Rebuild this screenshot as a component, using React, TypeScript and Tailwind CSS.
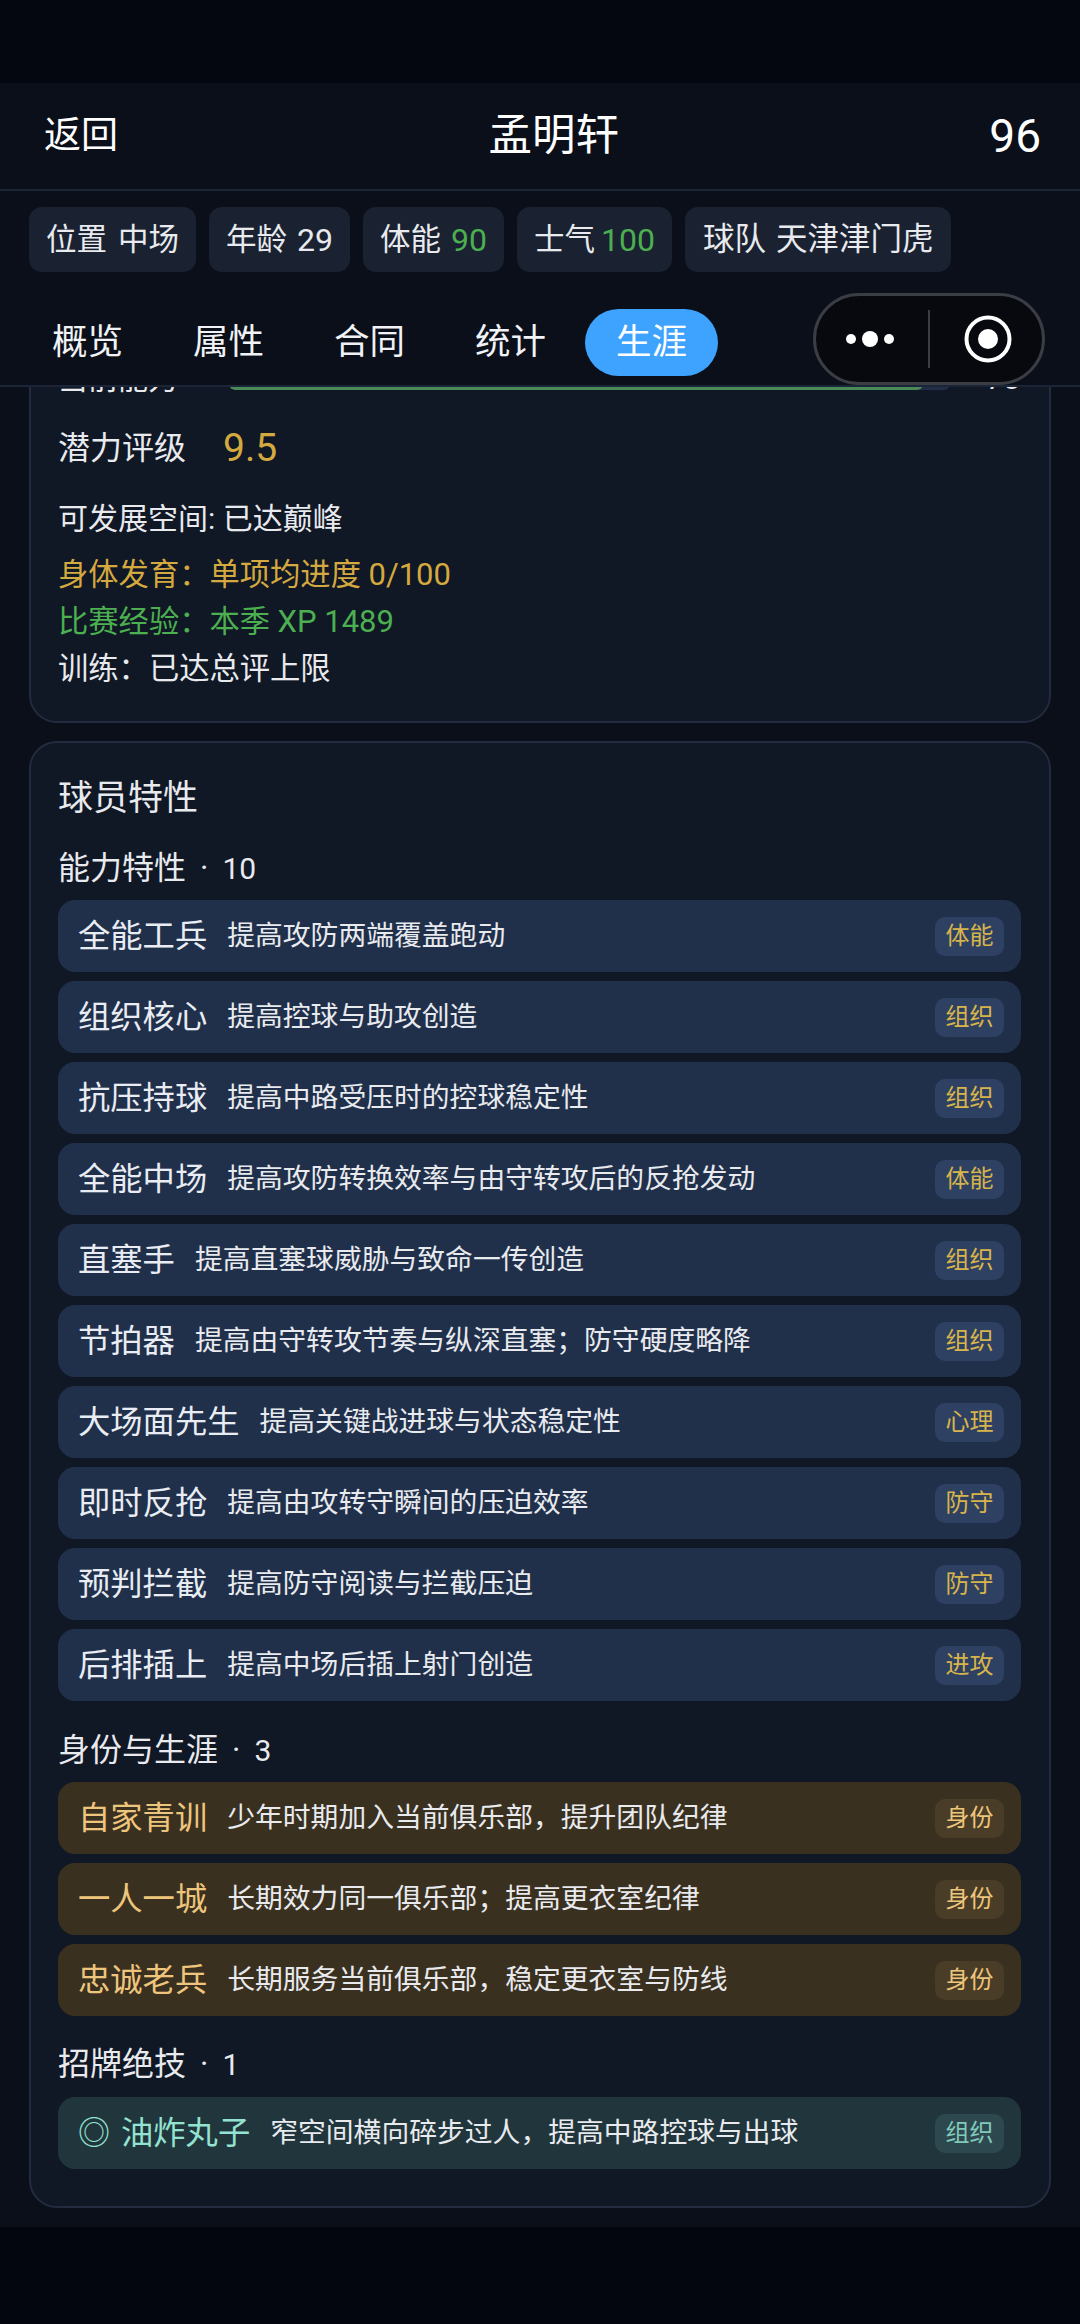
import React from 'react';

type Trait = { name: string; desc: string; tag: string; icon?: string };

const abilityTraits: Trait[] = [
  { name: '全能工兵', desc: '提高攻防两端覆盖跑动', tag: '体能' },
  { name: '组织核心', desc: '提高控球与助攻创造', tag: '组织' },
  { name: '抗压持球', desc: '提高中路受压时的控球稳定性', tag: '组织' },
  { name: '全能中场', desc: '提高攻防转换效率与由守转攻后的反抢发动', tag: '体能' },
  { name: '直塞手', desc: '提高直塞球威胁与致命一传创造', tag: '组织' },
  { name: '节拍器', desc: '提高由守转攻节奏与纵深直塞；防守硬度略降', tag: '组织' },
  { name: '大场面先生', desc: '提高关键战进球与状态稳定性', tag: '心理' },
  { name: '即时反抢', desc: '提高由攻转守瞬间的压迫效率', tag: '防守' },
  { name: '预判拦截', desc: '提高防守阅读与拦截压迫', tag: '防守' },
  { name: '后排插上', desc: '提高中场后插上射门创造', tag: '进攻' },
];

const careerTraits: Trait[] = [
  { name: '自家青训', desc: '少年时期加入当前俱乐部，提升团队纪律', tag: '身份' },
  { name: '一人一城', desc: '长期效力同一俱乐部；提高更衣室纪律', tag: '身份' },
  { name: '忠诚老兵', desc: '长期服务当前俱乐部，稳定更衣室与防线', tag: '身份' },
];

const variants = {
  ability: { row: 'bg-[#20304b]', name: 'text-[#e9edf3]', tagBox: 'bg-[#2e4162]', tag: 'text-[#d8b44c]' },
  career: { row: 'bg-[#3a3020]', name: 'text-[#eec57c]', tagBox: 'bg-[#4a3d27]', tag: 'text-[#eec57c]' },
  signature: { row: 'bg-[#21363c]', name: 'text-[#93e2d2]', tagBox: 'bg-[#2d484e]', tag: 'text-[#80cabc]' },
};

function TraitRow({ trait, variant }: { trait: Trait; variant: keyof typeof variants }) {
  const v = variants[variant];
  return (
    <div className={`flex h-[72px] items-center rounded-[17px] pl-5 pr-[17px] ${v.row}`}>
      {trait.icon && <span className={`mr-[11px] text-[32px] leading-10 ${v.name}`}>{trait.icon}</span>}
      <span className={`mr-5 whitespace-nowrap text-[32.3px] leading-10 ${v.name}`}>{trait.name}</span>
      <span className="flex-1 whitespace-nowrap text-[27.8px] leading-10 text-[#e8eaee]">{trait.desc}</span>
      <span className={`flex h-[39px] w-[69px] items-center justify-center rounded-[10px] text-[24px] ${v.tagBox} ${v.tag}`}>
        {trait.tag}
      </span>
    </div>
  );
}

function Chip({ label, value, className, valueClass = '' }: { label: string; value: string; className: string; valueClass?: string }) {
  return (
    <div className={`flex h-[65px] items-center whitespace-nowrap rounded-[13px] bg-[#1a2232] text-[#e8eaee] ${className}`}>
      <span>{label}</span>
      <span className={valueClass}>{value}</span>
    </div>
  );
}

function SectionLabel({ label, count }: { label: string; count: number }) {
  return (
    <div className="flex h-10 items-center text-[32px]">
      <span>{label}</span>
      <span className="ml-[14px] mr-[14px]">·</span>
      <span className="text-[30px]">{count}</span>
    </div>
  );
}

function CapsuleMenu() {
  return (
    <div className="absolute left-[813px] top-[293px] flex h-[92px] w-[232px] items-center rounded-full border-[3px] border-[#3b3d45] bg-[#08090e]">
      <svg width="226" height="86" viewBox="0 0 226 86" fill="none">
        <circle cx="35" cy="43" r="5" fill="#fff" />
        <circle cx="54" cy="43" r="8" fill="#fff" />
        <circle cx="73" cy="43" r="5" fill="#fff" />
        <rect x="112" y="14" width="2" height="58" fill="#3b3d45" />
        <circle cx="172" cy="43" r="21.5" stroke="#fff" strokeWidth="4" />
        <circle cx="172" cy="43" r="10" fill="#fff" />
      </svg>
    </div>
  );
}

export default function App() {
  const fontStack = { fontFamily: 'Roboto, "Noto Sans CJK SC", sans-serif' };
  const tabs = ['概览', '属性', '合同', '统计', '生涯'];

  return (
    <div style={fontStack} className="relative flex h-[2324px] w-[1080px] flex-col overflow-hidden bg-[#03060e] text-[#e8eaee]">
      {/* status bar gap */}
      <div className="h-[83px] bg-[#04070f]" />

      {/* Top bar */}
      <div className="flex h-[108px] items-center justify-between border-b-2 border-[#1c2538] bg-[#0a0f1a] pl-[44px] pr-[39px]">
        <span className="text-[37px] text-white">返回</span>
        <span className="text-[43.5px] text-white">孟明轩</span>
        <span className="text-[46px] text-white">96</span>
      </div>

      {/* Chips */}
      <div className="flex h-[81px] items-end gap-[13px] bg-[#0a0f1a] pl-[29px]">
        <Chip label="位置" value="中场" className="gap-[11px] px-[17px] text-[30.5px]" />
        <Chip label="年龄" value="29" className="gap-[10px] px-[17px] text-[30.5px]" valueClass="text-[32px]" />
        <Chip label="体能" value="90" className="gap-[10px] px-[17px] text-[30.5px]" valueClass="text-[32px] text-[#4caf50]" />
        <Chip label="士气" value="100" className="gap-[6px] px-[17px] text-[30.5px]" valueClass="text-[32px] text-[#4caf50]" />
        <Chip label="球队" value="天津津门虎" className="gap-[10px] px-[18px] text-[31.5px]" />
      </div>

      {/* Tabs */}
      <div className="flex h-[115px] items-start gap-2 border-b-2 border-[#1c2538] bg-[#0a0f1a] pl-[21px] pt-[37px]">
        {tabs.map((t) => (
          <div
            key={t}
            className={
              t === '生涯'
                ? 'flex h-[67px] w-[133px] items-center justify-center rounded-full bg-[#3ea2ff] text-[35.5px] text-white'
                : 'flex h-[67px] w-[133px] items-center justify-center text-[35.5px] text-[#f0f2f5]'
            }
          >
            {t}
          </div>
        ))}
      </div>

      {/* Scrolled content */}
      <div className="h-[1840px] overflow-hidden bg-[#0a0f1a] px-[29px]">
        <div className="-mt-[87px] rounded-[28px] border-2 border-[#232b3e] bg-[#101725] px-[27px] pb-[29px] pt-[56px]">
          <div className="flex h-10 items-center text-[30px]">
            <span className="w-[171px]">当前能力</span>
            <div className="mt-[12px] h-[12px] w-[721px] overflow-hidden rounded-full bg-[#232d45]">
              <div className="h-full w-[694px] rounded-full bg-[#4a8a58]" />
            </div>
            <span className="ml-auto mr-[2px] text-[30px]">78</span>
          </div>
          <div className="mt-[26px] flex h-12 items-center text-[32px]">
            <span className="w-[165px]">潜力评级</span>
            <span className="text-[39px] text-[#d4a93f]">9.5</span>
          </div>
          <div className="mt-[27px] h-10 text-[30px] leading-10">可发展空间: 已达巅峰</div>
          <div className="mt-[12px] h-[47px] text-[30.3px] leading-[47px] text-[#d4a93f]">
            身体发育：单项均进度 <span className="text-[31px]">0/100</span>
          </div>
          <div className="h-[47px] text-[30.3px] leading-[47px] text-[#4caf50]">
            比赛经验：本季 <span className="text-[31px]">XP 1489</span>
          </div>
          <div className="h-[47px] text-[30.3px] leading-[47px]">训练：已达总评上限</div>
        </div>

        <div className="mt-[18px] rounded-[28px] border-2 border-[#232b3e] bg-[#101725] pb-[37px] pl-[27px] pr-[28px] pt-[32px]">
          <h2 className="h-12 text-[35px] leading-[48px]">球员特性</h2>

          <div className="mb-3 mt-[25px]">
            <SectionLabel label="能力特性" count={10} />
          </div>
          <div className="flex flex-col gap-[9px]">
            {abilityTraits.map((t) => (
              <TraitRow key={t.name} trait={t} variant="ability" />
            ))}
          </div>

          <div className="mb-3 mt-[29px]">
            <SectionLabel label="身份与生涯" count={3} />
          </div>
          <div className="flex flex-col gap-[9px]">
            {careerTraits.map((t) => (
              <TraitRow key={t.name} trait={t} variant="career" />
            ))}
          </div>

          <div className="mb-[13px] mt-7">
            <SectionLabel label="招牌绝技" count={1} />
          </div>
          <TraitRow trait={{ icon: '◎', name: '油炸丸子', desc: '窄空间横向碎步过人，提高中路控球与出球', tag: '组织' }} variant="signature" />
        </div>
      </div>

      <CapsuleMenu />
    </div>
  );
}
